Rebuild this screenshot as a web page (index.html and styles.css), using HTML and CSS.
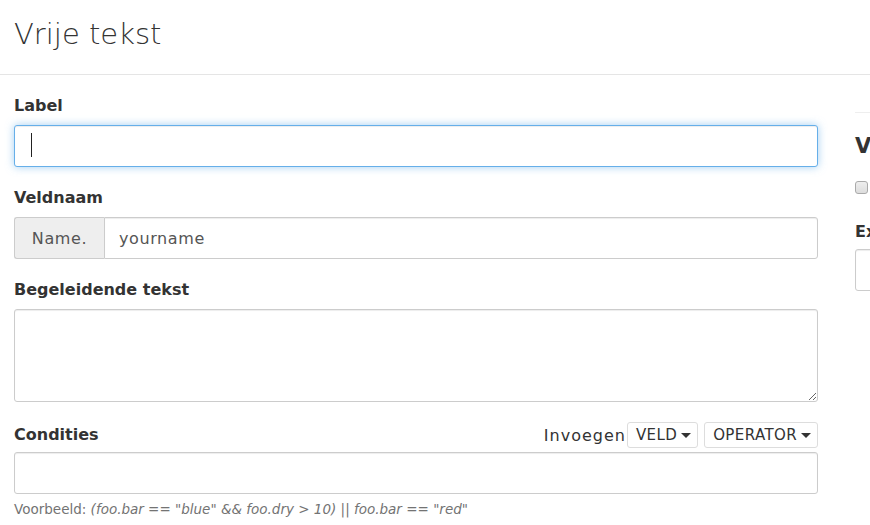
FILE: index.html
```html
<!DOCTYPE html>
<html lang="nl">
<head>
<meta charset="utf-8">
<title>Vrije tekst</title>
<link rel="stylesheet" href="styles.css">
</head>
<body>
<header class="page-header">
  <h2 class="page-title">Vrije tekst</h2>
</header>
<main class="layout">
  <section class="main-col">
    <div class="form-group">
      <label class="control-label">Label</label>
      <div class="focus-wrap">
        <input class="form-control is-focused" type="text" value="">
        <span class="text-caret"></span>
      </div>
    </div>
    <div class="form-group">
      <label class="control-label">Veldnaam</label>
      <div class="input-group">
        <span class="input-addon">Name.</span>
        <input class="form-control group-input" type="text" value="yourname">
      </div>
    </div>
    <div class="form-group">
      <label class="control-label">Begeleidende tekst</label>
      <textarea class="form-control textarea"></textarea>
    </div>
    <div class="form-group last">
      <div class="label-row">
        <label class="control-label inline">Condities</label>
        <div class="insert-tools">
          <span class="insert-label">Invoegen</span>
          <button class="btn-drop" type="button">VELD <span class="tri"></span></button>
          <button class="btn-drop" type="button">OPERATOR <span class="tri"></span></button>
        </div>
      </div>
      <input class="form-control" type="text" value="">
      <p class="help-block">Voorbeeld: <em>(foo.bar == "blue" &amp;&amp; foo.dry &gt; 10) || foo.bar == "red"</em></p>
    </div>
  </section>
  <aside class="side-col">
    <h3 class="side-title">Validatie</h3>
    <div class="check-row"><span class="fake-check"></span><span>Verplicht</span></div>
    <label class="control-label">Extra</label>
    <input class="form-control" type="text" value="">
  </aside>
</main>
</body>
</html>
```

FILE: styles.css
```css
* { box-sizing: border-box; }
html, body { margin: 0; padding: 0; }
body {
  font-family: "DejaVu Sans", "Open Sans", sans-serif;
  font-size: 16px;
  color: #333;
  background: #fff;
  width: 870px;
  overflow: hidden;
}
.page-header {
  height: 75px;
  border-bottom: 1px solid #e5e5e5;
  padding: 16px 14px 0;
}
.page-title {
  margin: 0;
  font-size: 29px;
  font-weight: 200;
  line-height: 36px;
  color: #333;
}
.layout {
  display: flex;
  padding: 20px 0 0 14px;
  gap: 37px;
}
.main-col { width: 804px; flex: none; }
.side-col {
  flex: none;
  width: 200px;
  margin-top: 17px;
  border-top: 1px solid #eee;
}
.form-group { margin-bottom: 20px; }
.control-label {
  display: block;
  font-weight: 700;
  font-size: 16px;
  line-height: 22px;
  margin-bottom: 8px;
}
.control-label.inline { margin-bottom: 0; }
.form-control {
  display: block;
  width: 100%;
  height: 42px;
  padding: 6px 14px;
  font-family: inherit;
  font-size: 16px;
  letter-spacing: 0.6px;
  color: #555;
  background: #fff;
  border: 1px solid #ccc;
  border-radius: 3px;
  box-shadow: inset 0 1px 1px rgba(0,0,0,.075);
  outline: none;
}
.is-focused {
  border-color: #66afe9;
  box-shadow: inset 0 1px 1px rgba(0,0,0,.075), 0 0 8px rgba(102,175,233,.6);
}
.focus-wrap { position: relative; }
.text-caret {
  position: absolute;
  left: 17px;
  top: 8px;
  width: 1px;
  height: 24px;
  background: #222;
}
.input-group { display: flex; }
.input-addon {
  flex: none;
  width: 90px;
  height: 42px;
  display: flex;
  align-items: center;
  justify-content: center;
  background: #eee;
  border: 1px solid #ccc;
  border-right: none;
  border-radius: 3px 0 0 3px;
  color: #555;
  font-size: 16px;
  letter-spacing: 0.6px;
}
.group-input { border-radius: 0 3px 3px 0; }
.textarea { height: 93px; resize: vertical; }
.label-row {
  display: flex;
  justify-content: space-between;
  align-items: center;
  height: 26px;
  margin-bottom: 4px;
}
.insert-tools { display: flex; align-items: center; }
.insert-label { font-size: 16px; letter-spacing: 1px; color: #333; margin-right: 1px; }
.btn-drop {
  display: flex;
  align-items: center;
  gap: 4px;
  height: 26px;
  padding: 0 6px 0 8px;
  margin-left: 6px;
  font-family: inherit;
  font-size: 15px;
  letter-spacing: 0.4px;
  color: #333;
  background: #fff;
  border: 1px solid #ddd;
  border-radius: 3px;
}
.btn-drop:first-of-type { margin-left: 0; }
.tri {
  width: 0; height: 0;
  border-left: 5px solid transparent;
  border-right: 5px solid transparent;
  border-top: 5px solid #333;
}
.help-block {
  margin: 5px 0 0;
  font-size: 13.5px;
  line-height: 20px;
  color: #737373;
}
.help-block em { font-style: italic; }
.side-title {
  margin: 20px 0 0;
  font-size: 21px;
  font-weight: 700;
  line-height: 26px;
}
.check-row {
  display: flex;
  align-items: center;
  gap: 8px;
  margin-top: 20px;
  height: 16px;
}
.fake-check {
  width: 13px; height: 13px;
  border: 1px solid #aaa;
  border-radius: 3px;
  background: linear-gradient(#eee, #ddd);
}
.side-col .control-label { margin-top: 26px; margin-bottom: 6px; }
```
